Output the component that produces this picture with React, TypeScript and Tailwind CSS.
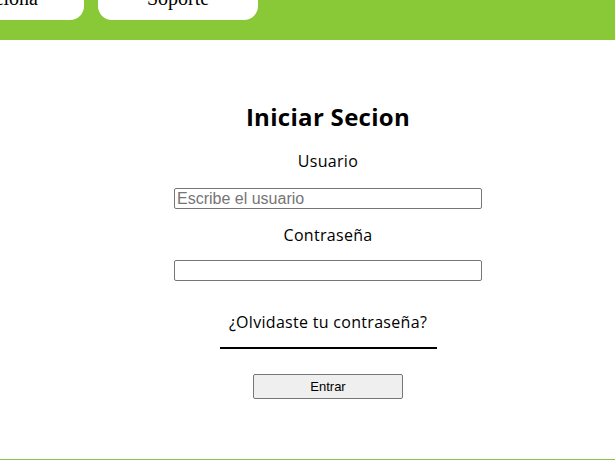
import React from "react";

export default function App() {
  return (
    <div className="w-[615px] h-[460px] overflow-hidden bg-white flex flex-col">
      <header className="h-[40px] bg-[#89c836] flex items-start gap-[14px] shrink-0">
        <div className="-ml-[76px] -mt-[20px] w-[160px] h-[40px] bg-white rounded-b-[14px] flex items-end justify-center pb-[12px] font-['Liberation_Serif',serif] text-[20px] text-black leading-none">
          Opciona
        </div>
        <div className="-mt-[20px] w-[160px] h-[40px] bg-white rounded-b-[14px] flex items-end justify-center pb-[12px] font-['Liberation_Serif',serif] text-[20px] text-black leading-none">
          Soporte
        </div>
      </header>
      <main className="flex-1 flex flex-col items-center pl-[41px] font-['Open_Sans',sans-serif] text-black tracking-[0.3px]">
        <h1 className="mt-[62px] text-[24px] font-bold leading-[30px]">Iniciar Secion</h1>
        <p className="mt-[19px] text-[16px] leading-[20px]">Usuario</p>
        <input
          type="text"
          placeholder="Escribe el usuario"
          className="mt-[17px] w-[308px] h-[21px] border border-[#767676] rounded-[2px] px-[2px] text-[16px] leading-[19px] tracking-normal font-['Liberation_Sans',sans-serif] placeholder:text-[#757575] outline-none"
        />
        <p className="mt-[16px] text-[16px] leading-[20px]">Contraseña</p>
        <input
          type="password"
          className="mt-[15px] w-[308px] h-[21px] border border-[#767676] rounded-[2px] px-[2px] text-[13px] outline-none"
        />
        <p className="mt-[31px] text-[16px] leading-[20px]">¿Olvidaste tu contraseña?</p>
        <div className="mt-[15px] w-[217px] h-[2px] bg-black" />
        <button className="mt-[25px] w-[150px] h-[25px] bg-[#efefef] border border-[#767676] rounded-[2px] text-[13px] tracking-normal font-['Liberation_Sans',sans-serif]">
          Entrar
        </button>
        <div className="flex-1" />
      </main>
      <div className="h-[1px] bg-[#8fbf4f] shrink-0" />
    </div>
  );
}
